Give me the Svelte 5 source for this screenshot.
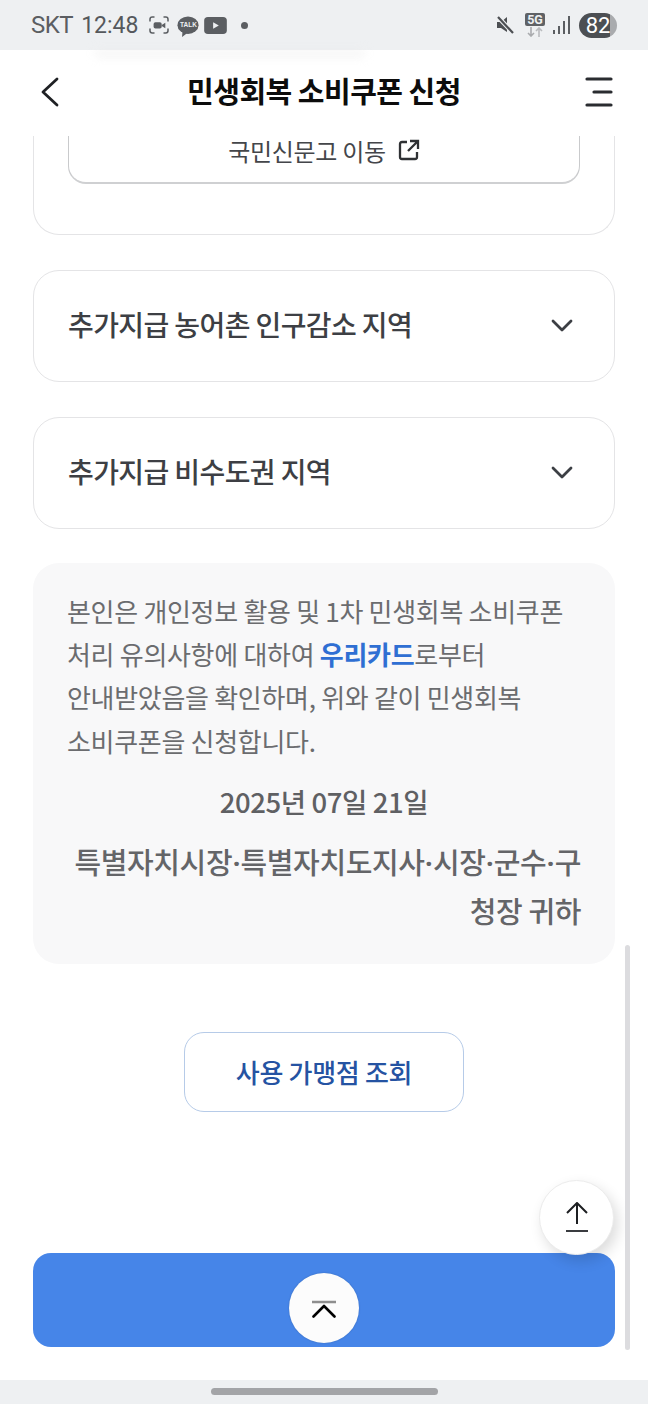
<script>
  const regions = ['추가지급 농어촌 인구감소 지역', '추가지급 비수도권 지역'];
</script>

<div class="app">
  <div class="status">
    <div class="left">
      <span class="carrier">SKT</span>
      <span class="time">12:48</span>
      <svg class="i-rec" viewBox="0 0 22 20" width="20" height="18" fill="none" stroke="#5b5e62" stroke-width="1.700">
        <path d="M1 6V3.500Q1 1 3.500 1H6M16 1h2.500Q21 1 21 3.500V6M21 14v2.500q0 2.500-2.500 2.500H16M6 19H3.500Q1 19 1 16.500V14"/>
        <rect x="5" y="7" width="9" height="7" rx="2" fill="#5b5e62" stroke="none"/>
        <path d="M14 10l4-2.500v6L14 11z" fill="#5b5e62" stroke="none"/>
      </svg>
      <span class="talk">
        <svg viewBox="0 0 24 24" width="22" height="22"><ellipse cx="12" cy="10" rx="11.500" ry="9.500" fill="#5b5e62"/><path d="M6 17l-.5 6L12 18z" fill="#5b5e62"/></svg>
        <b>TALK</b>
      </span>
      <svg viewBox="0 0 24 18" width="23" height="17"><rect width="24" height="18" rx="4" fill="#5b5e62"/><path d="M9.500 5.500v7l6-3.500z" fill="#eef0f2"/></svg>
      <span class="dot"></span>
    </div>
    <div class="right">
      <svg viewBox="0 0 20 20" width="20" height="20"><path d="M2 7h4l6-5v15L6 13H2z" fill="#4c4f53"/><path d="M3 2l15 16" stroke="#eef0f2" stroke-width="4.500"/><path d="M3 2l15 16" stroke="#4c4f53" stroke-width="2.200"/></svg>
      <span class="net">
        <b>5G</b>
        <svg viewBox="0 0 20 10" width="20" height="10" fill="none" stroke-width="1.600"><path d="M6 0v9M3 6l3 3 3-3" stroke="#a9abae"/><path d="M14 10V1M11 4l3-3 3 3" stroke="#b9bbbe"/></svg>
      </span>
      <svg class="sig" viewBox="0 0 17 20" width="17" height="20"><rect x="0" y="15" width="2" height="4" fill="#5b5e62"/><rect x="5" y="11" width="2" height="8" fill="#5b5e62"/><rect x="10" y="6" width="2" height="13" fill="#5b5e62"/><rect x="15" y="1" width="2" height="18" fill="#5b5e62"/></svg>
      <span class="batt">82</span>
    </div>
  </div>

  <header>
    <div class="ghost"></div>
    <button class="icon-btn" aria-label="뒤로">
      <svg viewBox="0 0 18 30" width="18" height="30" fill="none" stroke="#1f2124" stroke-width="2.800" stroke-linecap="round" stroke-linejoin="round"><path d="M16 2L2 15l14 13"/></svg>
    </button>
    <h1>민생회복 소비쿠폰 신청</h1>
    <button class="icon-btn" aria-label="메뉴">
      <svg viewBox="0 0 28 30" width="28" height="30" fill="none" stroke="#2a2c30" stroke-width="3.200" stroke-linecap="round"><path d="M2 2h24M9 15h17M2 28h24"/></svg>
    </button>
  </header>

  <main>
    <section class="card-partial">
      <button class="link-btn">
        국민신문고 이동
        <svg viewBox="0 0 22 22" width="22" height="22" fill="none" stroke="#2f3134" stroke-width="2.300"><path d="M9 3H4Q2 3 2 5v13q0 2 2 2h13q2 0 2-2v-5"/><path d="M12 2h8v8M20 2L10 12"/></svg>
      </button>
    </section>

    {#each regions as region}
      <button class="accordion">
        <span>{region}</span>
        <svg viewBox="0 0 22 14" width="22" height="14" fill="none" stroke="#3c3f44" stroke-width="2.800" stroke-linecap="round" stroke-linejoin="round"><path d="M2 2l9 9 9-9"/></svg>
      </button>
    {/each}

    <section class="notice">
      <p class="body">본인은 개인정보 활용 및 1차 민생회복 소비쿠폰<br />처리 유의사항에 대하여 <em>우리카드</em>로부터<br />안내받았음을 확인하며, 위와 같이 민생회복<br />소비쿠폰을 신청합니다.</p>
      <p class="date">2025년 07일 21일</p>
      <p class="to">특별자치시장<span class="d">·</span>특별자치도지사<span class="d">·</span>시장<span class="d">·</span>군수<span class="d">·</span>구<br />청장 귀하</p>
    </section>

    <div class="store-wrap"><button class="store">사용 가맹점 조회</button></div>

    <div class="cta">
      <button class="collapse" aria-label="접기">
        <svg viewBox="0 0 24 20" width="24" height="20" fill="none"><path d="M0 4h24" stroke="#8e8e8e" stroke-width="2.500"/><path d="M1.500 18.500L12 8l10.500 10.500" stroke="#000" stroke-width="2.600" stroke-linecap="round" stroke-linejoin="round"/></svg>
      </button>
    </div>
  </main>

  <button class="to-top" aria-label="맨 위로">
    <svg viewBox="0 0 24 32" width="24" height="32" fill="none" stroke="#1d1f22" stroke-width="2"><path d="M12 22V2M2 11l10-10 10 10" stroke-linejoin="round"/><path d="M1 29h22" stroke="#3a3c40"/></svg>
  </button>
  <div class="scrollbar"></div>

  <div class="navbar"><span></span></div>
</div>

<style>
  :global(body) { margin: 0; background: #fff; }
  .app {
    position: relative;
    width: 648px;
    height: 1404px;
    display: flex;
    flex-direction: column;
    overflow: hidden;
    background: #fff;
    font-family: "Noto Sans CJK KR", "Noto Sans", sans-serif;
  }
  button { font-family: inherit; padding: 0; background: none; border: 0; cursor: pointer; }

  .status {
    height: 50px;
    flex: none;
    background: #eef0f2;
    display: flex;
    justify-content: space-between;
    align-items: center;
    padding: 0 31px 0 31px;
    color: #5b5e62;
    box-sizing: border-box;
  }
  .left, .right { display: flex; align-items: center; }
  .carrier, .time { font-family: Roboto, sans-serif; font-size: 23px; }
  .carrier { margin-right: 8px; font-size: 24px; letter-spacing: -0.5px; }
  .time { margin-right: 11px; color: #55585c; }
  .talk { position: relative; display: flex; margin-left: 8px; margin-right: 5px; margin-top: 3px; }
  .talk b {
    position: absolute; left: 0; right: 0; top: 5px; text-align: center;
    font: 700 6.500px/8px "Liberation Sans", sans-serif; color: #eef0f2;
  }
  .dot { width: 7px; height: 7px; border-radius: 50%; background: #5b5e62; margin-left: 14px; }
  .net { display: flex; flex-direction: column; align-items: center; margin-left: 10px; margin-right: 8px; gap: 1px; }
  .net b {
    width: 20px; height: 13px; background: #5f6266; color: #eef0f2; border-radius: 2px;
    font: 700 12.500px/13px Roboto, sans-serif; text-align: center;
  }
  .batt {
    width: 38px; height: 25px; border-radius: 13px; margin-left: 9px;
    background: linear-gradient(90deg, #4c4f53 0 82%, #a9abae 82% 100%);
    color: #fff; font: 400 22px/25px Roboto, sans-serif; text-align: center;
  }

  header {
    position: relative;
    height: 86px;
    flex: none;
    background: #fff;
    display: flex;
    align-items: center;
    justify-content: space-between;
    padding: 0 35px 3px 41px;
    box-sizing: border-box;
  }
  .ghost {
    position: absolute; left: 95px; top: 0; width: 270px; height: 7px;
    background: #e9e9e9; filter: blur(5px); opacity: .5;
  }
  .icon-btn { display: flex; position: relative; }
  h1 {
    position: absolute; left: 0; right: 0; margin: 0; top: 17px;
    text-align: center; font-size: 29px; line-height: 46px; font-weight: 700; color: #0c0c0c;
    letter-spacing: -0.5px;
  }

  main {
    flex: 1;
    min-height: 0;
    padding: 0 33px 33px;
    display: flex;
    flex-direction: column;
  }
  .card-partial {
    height: 99px;
    flex: none;
    border: 1px solid #e4e4e6;
    border-top: 0;
    border-radius: 0 0 26px 26px;
    padding: 0 34px;
    box-sizing: border-box;
  }
  .link-btn {
    width: 100%;
    height: 48px;
    border: 1px solid #c9cacc;
    border-top: 0;
    border-bottom: 2px solid #cfd0d2;
    border-radius: 0 0 18px 18px;
    background: #fff;
    display: flex;
    align-items: center;
    justify-content: center;
    gap: 12px;
    font-size: 24px;
    letter-spacing: -0.3px;
    color: #44464a;
    box-sizing: border-box;
    padding-bottom: 18px;
  }
  .accordion {
    height: 112px;
    flex: none;
    margin-top: 35px;
    border: 1px solid #e4e4e6;
    border-radius: 26px;
    background: #fff;
    display: flex;
    align-items: center;
    justify-content: space-between;
    padding: 0 41px 0 34px;
    font-size: 28px;
    font-weight: 500;
    color: #3d3f44;
    box-sizing: border-box;
    letter-spacing: -0.6px;
  }
  .accordion span { position: relative; top: -2px; }
  .notice {
    margin-top: 34px;
    height: 401px;
    flex: none;
    box-sizing: border-box;
    background: #f8f8f9;
    border-radius: 26px;
    padding: 26px 34px 0;
    color: #6b6c6f;
  }
  .notice p { margin: 0; }
  .body { font-size: 26px; line-height: 43.200px; letter-spacing: -0.3px; }
  .body em { font-style: normal; font-weight: 700; color: #2f6fd3; }
  .date { margin-top: 19px !important; text-align: center; font-size: 27.500px; line-height: 40px; font-weight: 500; color: #5f6063; letter-spacing: -0.4px; }
  .to { margin-top: 17px !important; text-align: right; font-size: 29px; line-height: 46px; font-weight: 500; color: #646568; letter-spacing: -0.4px; white-space: nowrap; }
  .d { font-family: Roboto, sans-serif; font-weight: 700; }
  .store-wrap { margin-top: 68px; display: flex; justify-content: center; }
  .store {
    width: 280px; height: 80px;
    border: 1px solid #b6cbe8; border-radius: 20px; background: #fff;
    color: #2553a2; font-size: 26px; font-weight: 500; letter-spacing: -0.3px;
    padding-bottom: 2px;
  }
  .cta {
    margin-top: auto;
    height: 94px;
    flex: none;
    background: #4685e8;
    border-radius: 18px;
    position: relative;
  }
  .collapse {
    position: absolute; left: 256px; top: 20px;
    width: 70px; height: 70px; border-radius: 50%;
    background: #fcfcfc;
    display: flex; align-items: center; justify-content: center;
    box-shadow: 0 0 2px rgba(0,0,0,.2);
  }
  .to-top {
    position: absolute; left: 539px; top: 1180px;
    width: 75px; height: 75px; border-radius: 50%;
    background: #fff;
    border: 1px solid #ececec;
    box-sizing: border-box;
    display: flex; align-items: center; justify-content: center;
    box-shadow: 4px 6px 14px rgba(0,0,0,.14);
  }
  .scrollbar {
    position: absolute; left: 625px; top: 945px; width: 5px; height: 405px;
    background: #dcdcdf; border-radius: 3px;
  }
  .navbar {
    height: 24px; flex: none; background: #eef0f2;
    display: flex; justify-content: center; padding-top: 8px; box-sizing: border-box;
  }
  .navbar span { width: 227px; height: 7px; border-radius: 4px; background: #a3a4a7; }
</style>
